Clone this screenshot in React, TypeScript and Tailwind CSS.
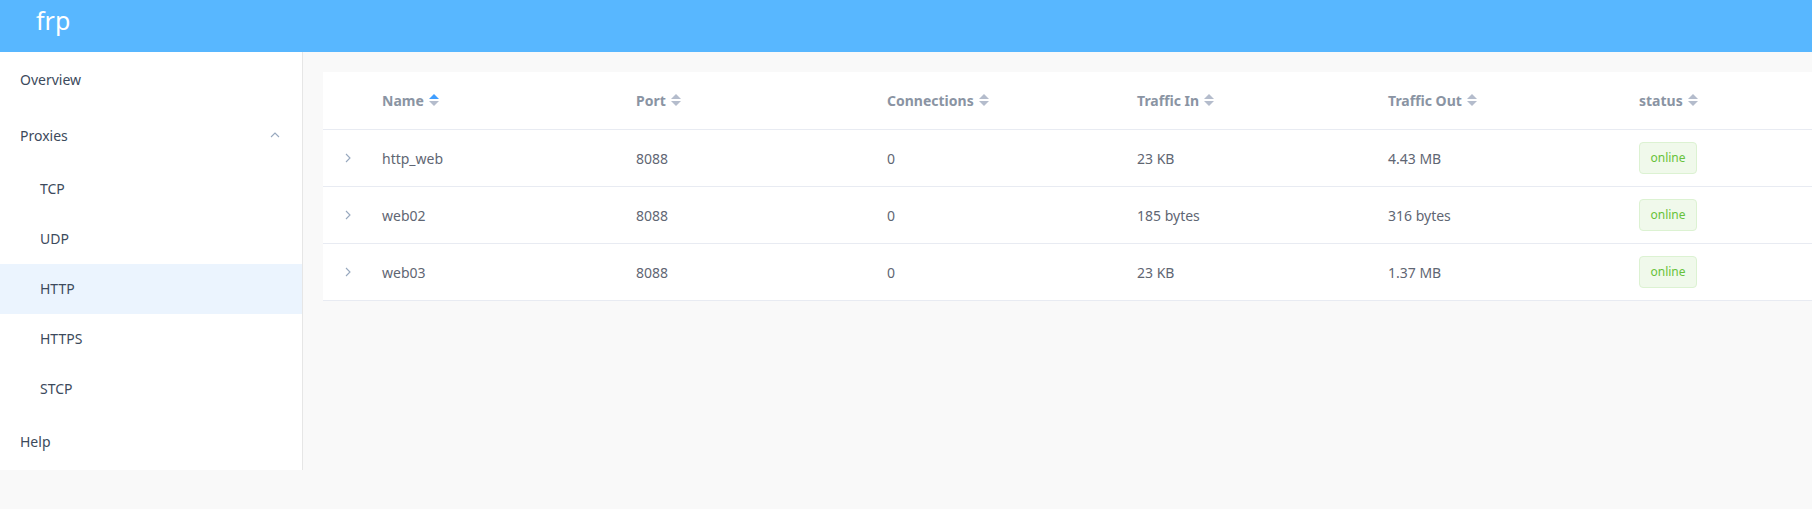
import React from "react";

const font = { fontFamily: '"Noto Sans", "Open Sans", Arial, sans-serif' };

function SortCaret({ active }: { active?: boolean }) {
  return (
    <span className="ml-[5px] inline-flex flex-col items-center gap-[2px]">
      <svg width="10" height="5" viewBox="0 0 10 5">
        <polygon points="0,5 5,0 10,5" fill={active ? "#409eff" : "#b4bccc"} />
      </svg>
      <svg width="10" height="5" viewBox="0 0 10 5">
        <polygon points="0,0 10,0 5,5" fill="#b4bccc" />
      </svg>
    </span>
  );
}

function ChevronRight() {
  return (
    <svg width="6" height="10" viewBox="0 0 6 10">
      <polyline points="1,1 5,5 1,9" fill="none" stroke="#97a8be" strokeWidth="1.1" />
    </svg>
  );
}

function ChevronUp() {
  return (
    <svg width="10" height="6" viewBox="0 0 10 6">
      <polyline points="1,5 5,1 9,5" fill="none" stroke="#97a8be" strokeWidth="1.1" />
    </svg>
  );
}

const rows = [
  { name: "http_web", port: "8088", conns: "0", inT: "23 KB", outT: "4.43 MB" },
  { name: "web02", port: "8088", conns: "0", inT: "185 bytes", outT: "316 bytes" },
  { name: "web03", port: "8088", conns: "0", inT: "23 KB", outT: "1.37 MB" },
];

const gridCols = "grid grid-cols-[48px_254px_251px_250px_251px_251px_1fr]";

export default function App() {
  return (
    <div className="min-h-[509px] w-full bg-[#f9f9f9]" style={font}>
      <div className="h-[52px] bg-[#58b7ff] pl-[36px] pt-[2px]">
        <span className="text-[25px] leading-[36px] text-white">frp</span>
      </div>
      <div className="flex">
        <div className="w-[303px] shrink-0 border-r border-[#e6e6e6] bg-white text-[14px] text-[#3c4a5c]">
          <div className="flex h-[56px] items-center pb-[2px] pl-[20px]">Overview</div>
          <div className="flex h-[56px] items-center justify-between pb-[2px] pl-[20px] pr-[22px]">
            <span>Proxies</span>
            <ChevronUp />
          </div>
          <div className="flex h-[50px] items-center pb-[2px] pl-[40px]">TCP</div>
          <div className="flex h-[50px] items-center pb-[2px] pl-[40px]">UDP</div>
          <div className="flex h-[50px] items-center bg-[#ebf4fe] pb-[2px] pl-[40px]">HTTP</div>
          <div className="flex h-[50px] items-center pb-[2px] pl-[40px]">HTTPS</div>
          <div className="flex h-[50px] items-center pb-[2px] pl-[40px]">STCP</div>
          <div className="flex h-[56px] items-center pb-[2px] pl-[20px]">Help</div>
        </div>
        <div className="min-w-0 flex-1 pl-[20px] pt-[20px]">
          <div className="bg-white text-[14px]">
            <div className={`${gridCols} h-[58px] items-center border-b border-[#e8ebf2] pb-[1px] font-bold text-[#8a94a3]`}>
              <div />
              <div className="flex items-center pl-[11px]">Name<SortCaret active /></div>
              <div className="flex items-center pl-[11px]">Port<SortCaret /></div>
              <div className="flex items-center pl-[11px]">Connections<SortCaret /></div>
              <div className="flex items-center pl-[11px]">Traffic In<SortCaret /></div>
              <div className="flex items-center pl-[11px]">Traffic Out<SortCaret /></div>
              <div className="flex items-center pl-[11px]">status<SortCaret /></div>
            </div>
            {rows.map((r) => (
              <div key={r.name} className={`${gridCols} h-[57px] items-center border-b border-[#e8ebf2] text-[#5f6673]`}>
                <div className="flex justify-center pl-[2px]"><ChevronRight /></div>
                <div className="pl-[11px]">{r.name}</div>
                <div className="pl-[11px]">{r.port}</div>
                <div className="pl-[11px]">{r.conns}</div>
                <div className="pl-[11px]">{r.inT}</div>
                <div className="pl-[11px]">{r.outT}</div>
                <div className="pl-[11px]">
                  <span className="inline-flex h-[32px] w-[58px] items-center justify-center rounded-[4px] border border-[#dcf2d2] bg-[#f0f9eb] text-[12px] text-[#67c23a]">
                    online
                  </span>
                </div>
              </div>
            ))}
          </div>
        </div>
      </div>
    </div>
  );
}
